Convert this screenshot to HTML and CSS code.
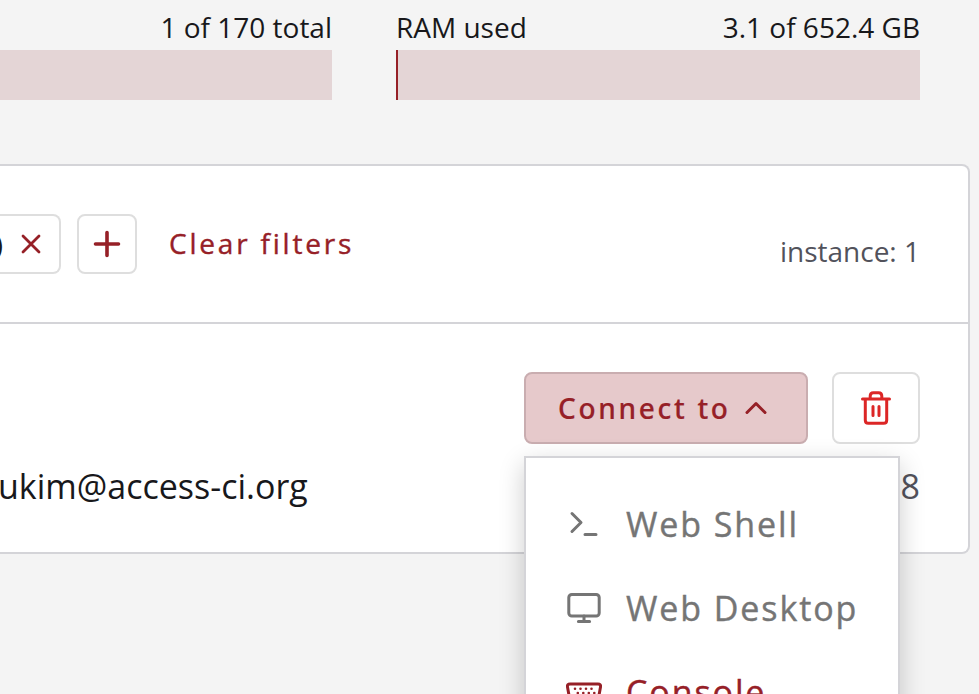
FILE: index.html
```html
<!DOCTYPE html>
<html lang="en">
<head>
<meta charset="utf-8">
<title>Instances</title>
<link rel="stylesheet" href="styles.css">
</head>
<body>
<section class="quotas">
  <div class="quota quota-instances">
    <div class="quota-label"><span>1 of 170 total</span></div>
    <div class="bar"></div>
  </div>
  <div class="quota quota-ram">
    <div class="quota-label"><span>RAM used</span><span>3.1 of 652.4 GB</span></div>
    <div class="bar"><div class="bar-fill"></div></div>
  </div>
</section>
<main class="panel">
  <header class="toolbar">
    <div class="chip"><span>)</span>
      <svg width="24" height="24" viewBox="0 0 24 24"><path d="M4 4l16 16M20 4L4 20"/></svg>
    </div>
    <button class="add" aria-label="Add filter"><svg width="30" height="30" viewBox="0 0 30 30"><path d="M15 3.5v23M3.5 15h23"/></svg></button>
    <a class="clear">Clear filters</a>
    <span class="count">instance: 1</span>
  </header>
  <article class="instance">
    <div class="actions">
      <div class="connect-wrap">
        <button class="connect"><span>Connect to</span>
          <svg width="24" height="16" viewBox="0 0 24 16"><path d="M3 12.5l9-9 9 9"/></svg>
        </button>
        <div class="menu">
          <div class="item">
            <svg width="36" height="36" viewBox="0 0 36 36"><path d="M6 7.5l9 9-9 9M19 28.5h11"/></svg>
            <span>Web Shell</span>
          </div>
          <div class="item">
            <svg width="36" height="36" viewBox="0 0 36 36"><rect x="2.8" y="4.5" width="30.4" height="21.5" rx="3"/><path d="M18 26v5M12.4 31.5h11.2"/></svg>
            <span>Web Desktop</span>
          </div>
          <div class="item active">
            <svg width="36" height="36" viewBox="0 0 36 36"><path d="M4 10h28q3 0 2.500 3l-2 11q-.5 3-3.500 3H7q-3 0-3.500-3l-2-11q-.5-3 2.500-3z"/><path class="pins" d="M9 14.800h18M11.800 19h17M14.500 23.200h8"/></svg>
            <span>Console</span>
          </div>
        </div>
      </div>
      <button class="delete" aria-label="Delete"><svg width="32" height="36" viewBox="0 0 32 36"><path d="M2.500 9h27M5.300 9v21.200q0 3 3 3h15.400q3 0 3-3V9M10.200 9V6q0-3.200 3.200-3.200h5.200q3.200 0 3.200 3.200v3M13 16.500v9M19 16.500v9"/></svg></button>
    </div>
    <div class="details"><span class="email">ukim@access-ci.org</span><span class="size">8</span></div>
  </article>
</main>
</body>
</html>
```

FILE: styles.css
```css
* { box-sizing: border-box; }
html { overflow: hidden; }
body {
  margin: 0;
  height: 694px;
  overflow: hidden;
  background: #f4f4f4;
  color: #18181b;
  font: 28px/38px "Open Sans", sans-serif;
}
button { font: inherit; padding: 0; }
svg { display: block; fill: none; stroke: currentColor; stroke-width: 3; stroke-linecap: round; stroke-linejoin: round; flex: none; }
.quotas { display: flex; gap: 64px; padding: 8px 59px 0 0; height: 164px; }
.quota-instances { width: 332px; }
.quota-ram { flex: 1; }
.quota-label { display: flex; justify-content: space-between; height: 42px; }
.quota-instances .quota-label { justify-content: flex-end; }
.bar { height: 50px; background: #e4d5d6; }
.bar-fill { width: 2px; height: 100%; background: #962027; }
.panel {
  width: 970px;
  height: 390px;
  background: #fff;
  border: 2px solid #d4d4d8;
  border-left: 0;
  border-radius: 0 8px 8px 0;
}
.toolbar { display: flex; align-items: center; height: 158px; border-bottom: 2px solid #d4d4d8; padding-right: 50px; color: #962027; }
.chip {
  display: flex; align-items: center; justify-content: space-between;
  width: 61px; height: 60px; padding-right: 16px; margin-right: 16px;
  border: 2px solid #dedede; border-left: 0; border-radius: 0 8px 8px 0;
}
.chip span { width: 3px; display: flex; justify-content: flex-end; color: #18181b; }
.chip svg { stroke-width: 2.8; }
.add { width: 60px; height: 60px; display: grid; place-items: center; background: #fff; border: 2px solid #dedede; border-radius: 8px; color: inherit; margin-right: 32px; }
.add svg { stroke-width: 3.6; }
.clear { margin-bottom: 2px; letter-spacing: 2.8px; -webkit-text-stroke: .4px currentColor; }
.count { margin: 14px -2px 0 auto; color: #52525b; }
.instance { padding: 48px 48px 0 0; }
.actions { display: flex; justify-content: flex-end; gap: 24px; height: 72px; }
.connect-wrap { position: relative; }
.connect {
  display: flex; align-items: center; gap: 13px;
  width: 284px; height: 72px; padding-left: 32px;
  color: #962027; background: #e6c9cb; border: 2px solid #c9adb0; border-radius: 8px;
  font-family: "Noto Sans", sans-serif; font-weight: 500; letter-spacing: 2.7px;
  -webkit-text-stroke: .2px currentColor;
}
.connect span { margin-bottom: 1px; }
.delete { width: 88px; height: 72px; display: grid; place-items: center; background: #fff; border: 2px solid #dedede; border-radius: 8px; color: #dc2626; }
.menu {
  position: absolute; top: 84px; left: 0; z-index: 2;
  width: 376px; height: 340px; padding: 24px 40px;
  background: #fff; border: 2px solid #d4d4d8;
  box-shadow: 0 8px 24px rgba(0, 0, 0, .2);
  color: #757575; font-size: 34px; letter-spacing: 1.9px; white-space: nowrap;
  -webkit-text-stroke: .4px currentColor;
}
.item { display: flex; align-items: center; gap: 24px; height: 84px; }
.active { color: #962027; }
.pins { stroke-width: 2.6; stroke-dasharray: 0 5.500; }
.details { display: flex; justify-content: space-between; margin-top: 18px; font-size: 34px; line-height: 48px; }
.email { margin-left: -2px; }
.size { color: #52525b; }
```
